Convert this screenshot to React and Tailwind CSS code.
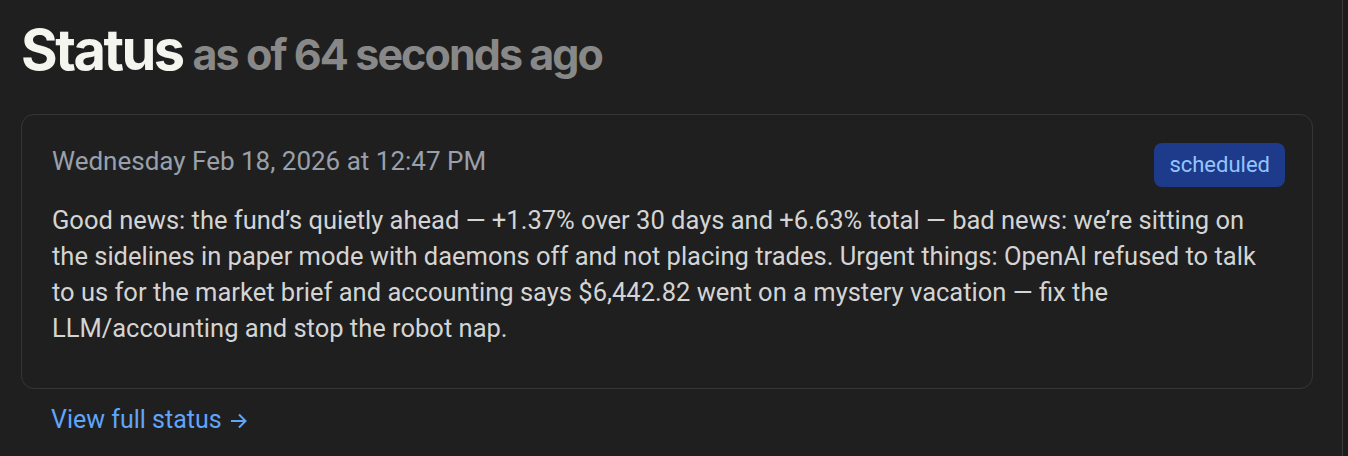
export default function App() {
  return (
    <div className="h-[456px] w-full bg-[#1f1f1f] flex overflow-hidden">
      <div className="flex-1 pl-[21px] pr-[29px] pt-[18px]">
        <h1 className="flex items-baseline gap-[10px] font-['Inter',sans-serif]">
          <span className="text-[56px] leading-[64px] font-bold tracking-[-0.045em] text-[#f5f5f0]">Status</span>
          <span className="text-[43px] leading-[64px] font-bold tracking-[-0.045em] text-[#888888]">as of 64 seconds ago</span>
        </h1>

        <div className="mt-[28px] rounded-[13px] border border-[#363636] pl-[30px] pr-[27px] pt-[28px] pb-[42px] font-['Roboto',sans-serif]">
          <div className="flex items-start justify-between">
            <p className="text-[26px] leading-[36px] text-[#9aa0ab]">Wednesday Feb 18, 2026 at 12:47 PM</p>
            <span className="rounded-[8px] bg-[#1e3a8a] px-[15px] py-[8px] text-[22px] leading-[28px] text-[#93c5fd]">
              scheduled
            </span>
          </div>
          <p className="mt-[15px] pr-[22px] text-[25.5px] leading-[36px] text-[#d4d4d4]">
            Good news: the fund’s quietly ahead — +1.37% over 30 days and +6.63% total — bad news: we’re sitting on the sidelines in paper mode with daemons off and not placing trades. Urgent things: OpenAI refused to talk to us for the market brief and accounting says $6,442.82 went on a mystery vacation — fix the LLM/accounting and stop the robot nap.
          </p>
        </div>

        <a href="#" className="mt-[15px] ml-[30px] inline-flex items-center gap-[8px] font-['Roboto',sans-serif] text-[25px] leading-[32px] text-[#60a5fa]">
          View full status
          <svg width="18" height="16" viewBox="0 0 18 16" fill="none" stroke="currentColor" strokeWidth="2" className="mt-[1px]">
            <path d="M1 8h15M9 1.5 15.5 8 9 14.5" />
          </svg>
        </a>
      </div>
      <div className="w-[6px] border-l border-[#3a3a3a] bg-[#1c1c1c]" />
    </div>
  );
}
